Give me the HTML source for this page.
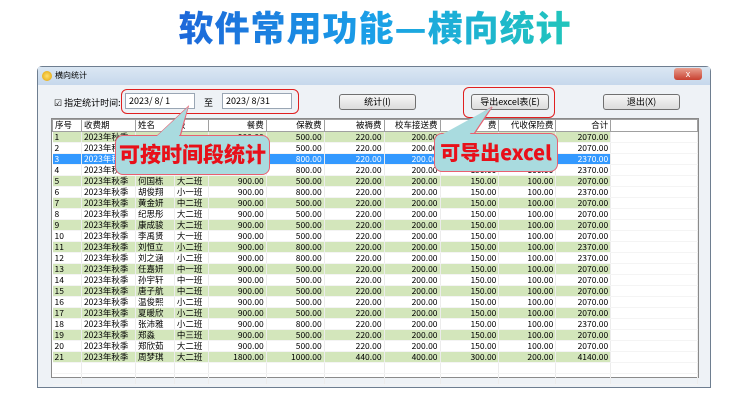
<!DOCTYPE html>
<html><head><meta charset="utf-8"><style>
*{margin:0;padding:0;box-sizing:border-box}
body{width:750px;height:417px;background:#fff;position:relative;overflow:hidden;font-family:"Liberation Sans","Noto Sans CJK SC",sans-serif}
.abs{position:absolute}
.title{left:0;width:750px;top:4px;text-align:center;font-size:35px;font-weight:900;line-height:46px;letter-spacing:1px;
background:linear-gradient(90deg,#1d63d8 22%,#1aa0e8 50%,#22c8b8 78%);-webkit-background-clip:text;background-clip:text;color:transparent;font-family:"Noto Sans CJK SC",sans-serif}
.win{left:37px;top:66px;width:674px;height:322px;background:#eef2f6;border:1px solid #6e7e90;border-radius:5px 5px 0 0}
.tb{left:0;top:0;width:672px;height:18px;background:linear-gradient(#dbe7f3,#c6d8ec)}
.t{font-size:9px;color:#000;font-family:"Noto Sans CJK SC",sans-serif;white-space:nowrap}
.btn{height:16px;border:1px solid #707070;border-radius:3px;background:linear-gradient(#f6f6f6,#dcdcdc);font-size:9px;text-align:center;line-height:14px;font-family:"Noto Sans CJK SC",sans-serif}
.inp{height:16px;background:#fff;border:1px solid #9aa6b4;font-size:9px;line-height:14px;padding-left:3px;font-family:"Noto Sans CJK SC",sans-serif}
.grid{left:51px;top:118px;width:648px;height:260px;background:#fff;border:1px solid #8a8a8a}
table{border-collapse:collapse;font-size:8.5px;font-family:"Noto Sans CJK SC",sans-serif;table-layout:fixed}
td,th{height:10.8px;line-height:10px;padding:0 2px;white-space:nowrap;overflow:hidden;border-right:1px solid #ececec;border-bottom:1px solid #f4f4f4;font-weight:normal}
th{background:#fff;border:1px solid #a0a0a0;height:12px;line-height:11px}
td.r,th.r{text-align:right}
tr.g td.c{background:#d3e6bb}
tr.s td.c{background:#3399ff;color:#fff}
.red{border:1.5px solid #e02020;border-radius:6px}
.bub{background:#a9dbdf;border:1.5px solid #e86070;border-radius:8px;color:#e8101a;font-weight:900;font-family:"Noto Sans CJK SC",sans-serif;text-align:center}
</style></head><body>
<div class="abs title">软件常用功能—横向统计</div>
<div class="abs win">
 <div class="abs tb">
  <div class="abs" style="left:4px;top:4px;width:10px;height:10px;border-radius:50%;background:radial-gradient(#ffe070,#e0a000)"></div>
  <div class="abs t" style="left:17px;top:3px;font-size:8px">横向统计</div>
  <div class="abs" style="left:636px;top:1px;width:28px;height:12px;background:linear-gradient(#e8a090,#c84030);border-radius:3px;color:#fff;font-size:9px;text-align:center;line-height:12px">x</div>
 </div>
</div>
<div class="abs t" style="left:54px;top:96px">☑ 指定统计时间:</div>
<div class="abs inp" style="left:125px;top:93px;width:70px">2023/ 8/ 1</div>
<div class="abs t" style="left:204px;top:96px">至</div>
<div class="abs inp" style="left:222px;top:93px;width:70px">2023/ 8/31</div>
<div class="abs btn" style="left:339px;top:94px;width:77px">统计(I)</div>
<div class="abs btn" style="left:471px;top:94px;width:78px">导出excel表(E)</div>
<div class="abs btn" style="left:603px;top:94px;width:77px">退出(X)</div>
<div class="abs red" style="left:121px;top:89px;width:178px;height:25px"></div>
<div class="abs red" style="left:463px;top:87px;width:92px;height:31px"></div>
<div class="abs grid">
<table>
<colgroup><col style="width:29px"><col style="width:54px"><col style="width:39px"><col style="width:34px"><col style="width:58px"><col style="width:58px"><col style="width:60px"><col style="width:56px"><col style="width:59px"><col style="width:57px"><col style="width:55px"><col style="width:87px"></colgroup>
<tr><th style="text-align:left">序号</th><th style="text-align:left">收费期</th><th style="text-align:left">姓名</th><th style="text-align:left">级</th><th class="r">餐费</th><th class="r">保教费</th><th class="r">被褥费</th><th class="r">校车接送费</th><th class="r">费</th><th class="r">代收保险费</th><th class="r">合计</th><th></th></tr>
<tbody id="tb"></tbody>
</table>
</div>
<script>
var d=[["何国栋","大二班",900,500,2070],["胡俊翔","小一班",900,800,2370],["黄金妍","中二班",900,500,2070],["纪思彤","大二班",900,500,2070],["康成骏","大二班",900,500,2070],["李禹贤","大一班",900,500,2070],["刘恒立","小二班",900,800,2370],["刘之涵","小二班",900,800,2370],["任嘉妍","中一班",900,500,2070],["孙宇轩","中一班",900,500,2070],["唐子航","中二班",900,500,2070],["温俊熙","小二班",900,500,2070],["夏暖欣","小二班",900,500,2070],["张沛雅","小二班",900,800,2370],["郑淼","中三班",900,500,2070],["郑欣茹","大二班",900,500,2070],["周梦琪","大二班",1800,1000,4140]];
var top4=[["","","",900,500,2070],["","","",900,500,2070],["","","",900,800,2370],["","","",900,800,2370]];
var h="";function f(n){return n.toFixed(2)}
function row(i,n,c,a,b,t,big){var cl=i==3?"s":(i%2?"g":"");var k=big?2:1;
return '<tr class="'+cl+'"><td class="c">'+i+'</td><td class="c">2023年秋季</td><td class="c">'+n+'</td><td class="c">'+c+'</td><td class="c r">'+f(a)+'</td><td class="c r">'+f(b)+'</td><td class="c r">'+f(220*k)+'</td><td class="c r">'+f(200*k)+'</td><td class="c r">'+f(150*k)+'</td><td class="c r">'+f(100*k)+'</td><td class="c r">'+f(t)+'</td><td></td></tr>'}
top4.forEach(function(r,i){h+=row(i+1,"","",r[3],r[4],r[5])});
d.forEach(function(r,i){h+=row(i+5,r[0],r[1],r[2],r[3],r[4],i==16)});
for(var j=0;j<2;j++)h+='<tr><td></td><td></td><td></td><td></td><td></td><td></td><td></td><td></td><td></td><td></td><td></td><td></td></tr>';
document.getElementById("tb").innerHTML=h;
</script>
<svg class="abs" style="left:0;top:0" width="750" height="417"><polygon points="188,107 156,137 180,137" fill="#a9dbdf" stroke="#e86070" stroke-width="1.2"/><polygon points="492,107 440,140 470,140" fill="#a9dbdf" stroke="#e86070" stroke-width="1.2"/></svg>
<div class="abs bub" style="left:115px;top:135px;width:155px;height:40px;font-size:21px;line-height:37px">可按时间段统计</div>
<div class="abs bub" style="left:434px;top:133px;width:124px;height:39px;font-size:20px;line-height:36px">可导出excel</div>
<svg class="abs" style="left:0;top:0" width="750" height="417"><polygon points="188,107 157,136 179,136" fill="#a9dbdf"/><polygon points="492,107 441,135 469,135" fill="#a9dbdf"/></svg>
</body></html>
